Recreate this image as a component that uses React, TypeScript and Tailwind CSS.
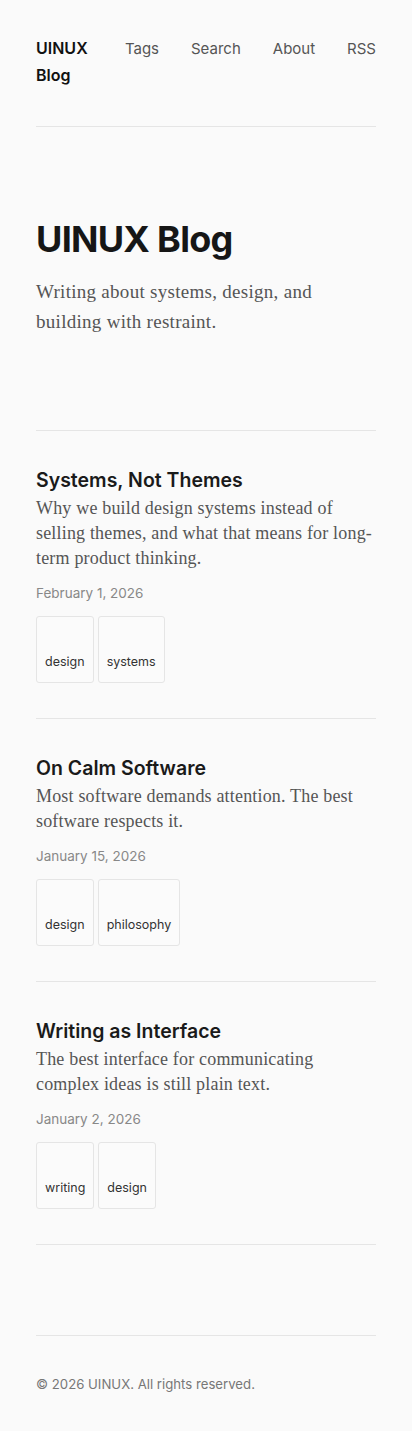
const posts = [
  {
    title: "Systems, Not Themes",
    desc: "Why we build design systems instead of selling themes, and what that means for long-term product thinking.",
    date: "February 1, 2026",
    tags: ["design", "systems"],
  },
  {
    title: "On Calm Software",
    desc: "Most software demands attention. The best software respects it.",
    date: "January 15, 2026",
    tags: ["design", "philosophy"],
  },
  {
    title: "Writing as Interface",
    desc: "The best interface for communicating complex ideas is still plain text.",
    date: "January 2, 2026",
    tags: ["writing", "design"],
  },
];

const sans = "font-['Inter','Liberation_Sans',sans-serif]";
const serif = "font-['Liberation_Serif','DejaVu_Serif',serif]";

export default function App() {
  return (
    <div className={`min-h-screen bg-[#fafafa] text-[#1a1a1a] ${sans}`}>
      <div className="px-9">
        <header className="flex items-start justify-between gap-8 border-b border-[#e5e5e5] pt-[35px] pb-[37px] text-[15px] leading-[27px]">
          <a className="text-base leading-[27px] font-semibold text-[#111]">UINUX Blog</a>
          <a className="text-[#555]">Tags</a>
          <a className="text-[#555]">Search</a>
          <a className="text-[#555]">About</a>
          <a className="text-[#555]">RSS</a>
        </header>

        <section className="border-b border-[#e5e5e5] pt-[92px] pb-[93px]">
          <h1 className="text-4xl leading-10 font-bold tracking-[-0.02em] text-[#161616]">UINUX Blog</h1>
          <p className={`mt-[18px] text-[19px] leading-[30px] tracking-[0.015em] text-[#555] ${serif}`}>
            Writing about systems, design, and building with restraint.
          </p>
        </section>

        <main className="pb-[90px]">
          {posts.map((p) => (
            <article key={p.title} className="border-b border-[#e5e5e5] pt-[37px] pb-[35px]">
              <h2 className="text-[19.5px] leading-6 font-semibold text-[#1a1a1a]">{p.title}</h2>
              <p className={`mt-1 text-[18px] leading-[25px] tracking-[0.01em] text-[#555] ${serif}`}>{p.desc}</p>
              <p className="mt-3 text-[13.5px] leading-5 text-[#888]">{p.date}</p>
              <div className="mt-[13px] flex gap-1">
                {p.tags.map((t) => (
                  <span
                    key={t}
                    className="flex h-[67px] items-end rounded-[3px] border border-[#e5e5e5] bg-[#fbfbfb] px-2 pb-[12px] text-[12.5px] leading-4 text-[#333]"
                  >
                    {t}
                  </span>
                ))}
              </div>
            </article>
          ))}
        </main>

        <footer className="border-t border-[#e5e5e5] pt-[38px] pb-[39px]">
          <p className="text-[13.2px] leading-5 text-[#777]">© 2026 UINUX. All rights reserved.</p>
        </footer>
      </div>
    </div>
  );
}
